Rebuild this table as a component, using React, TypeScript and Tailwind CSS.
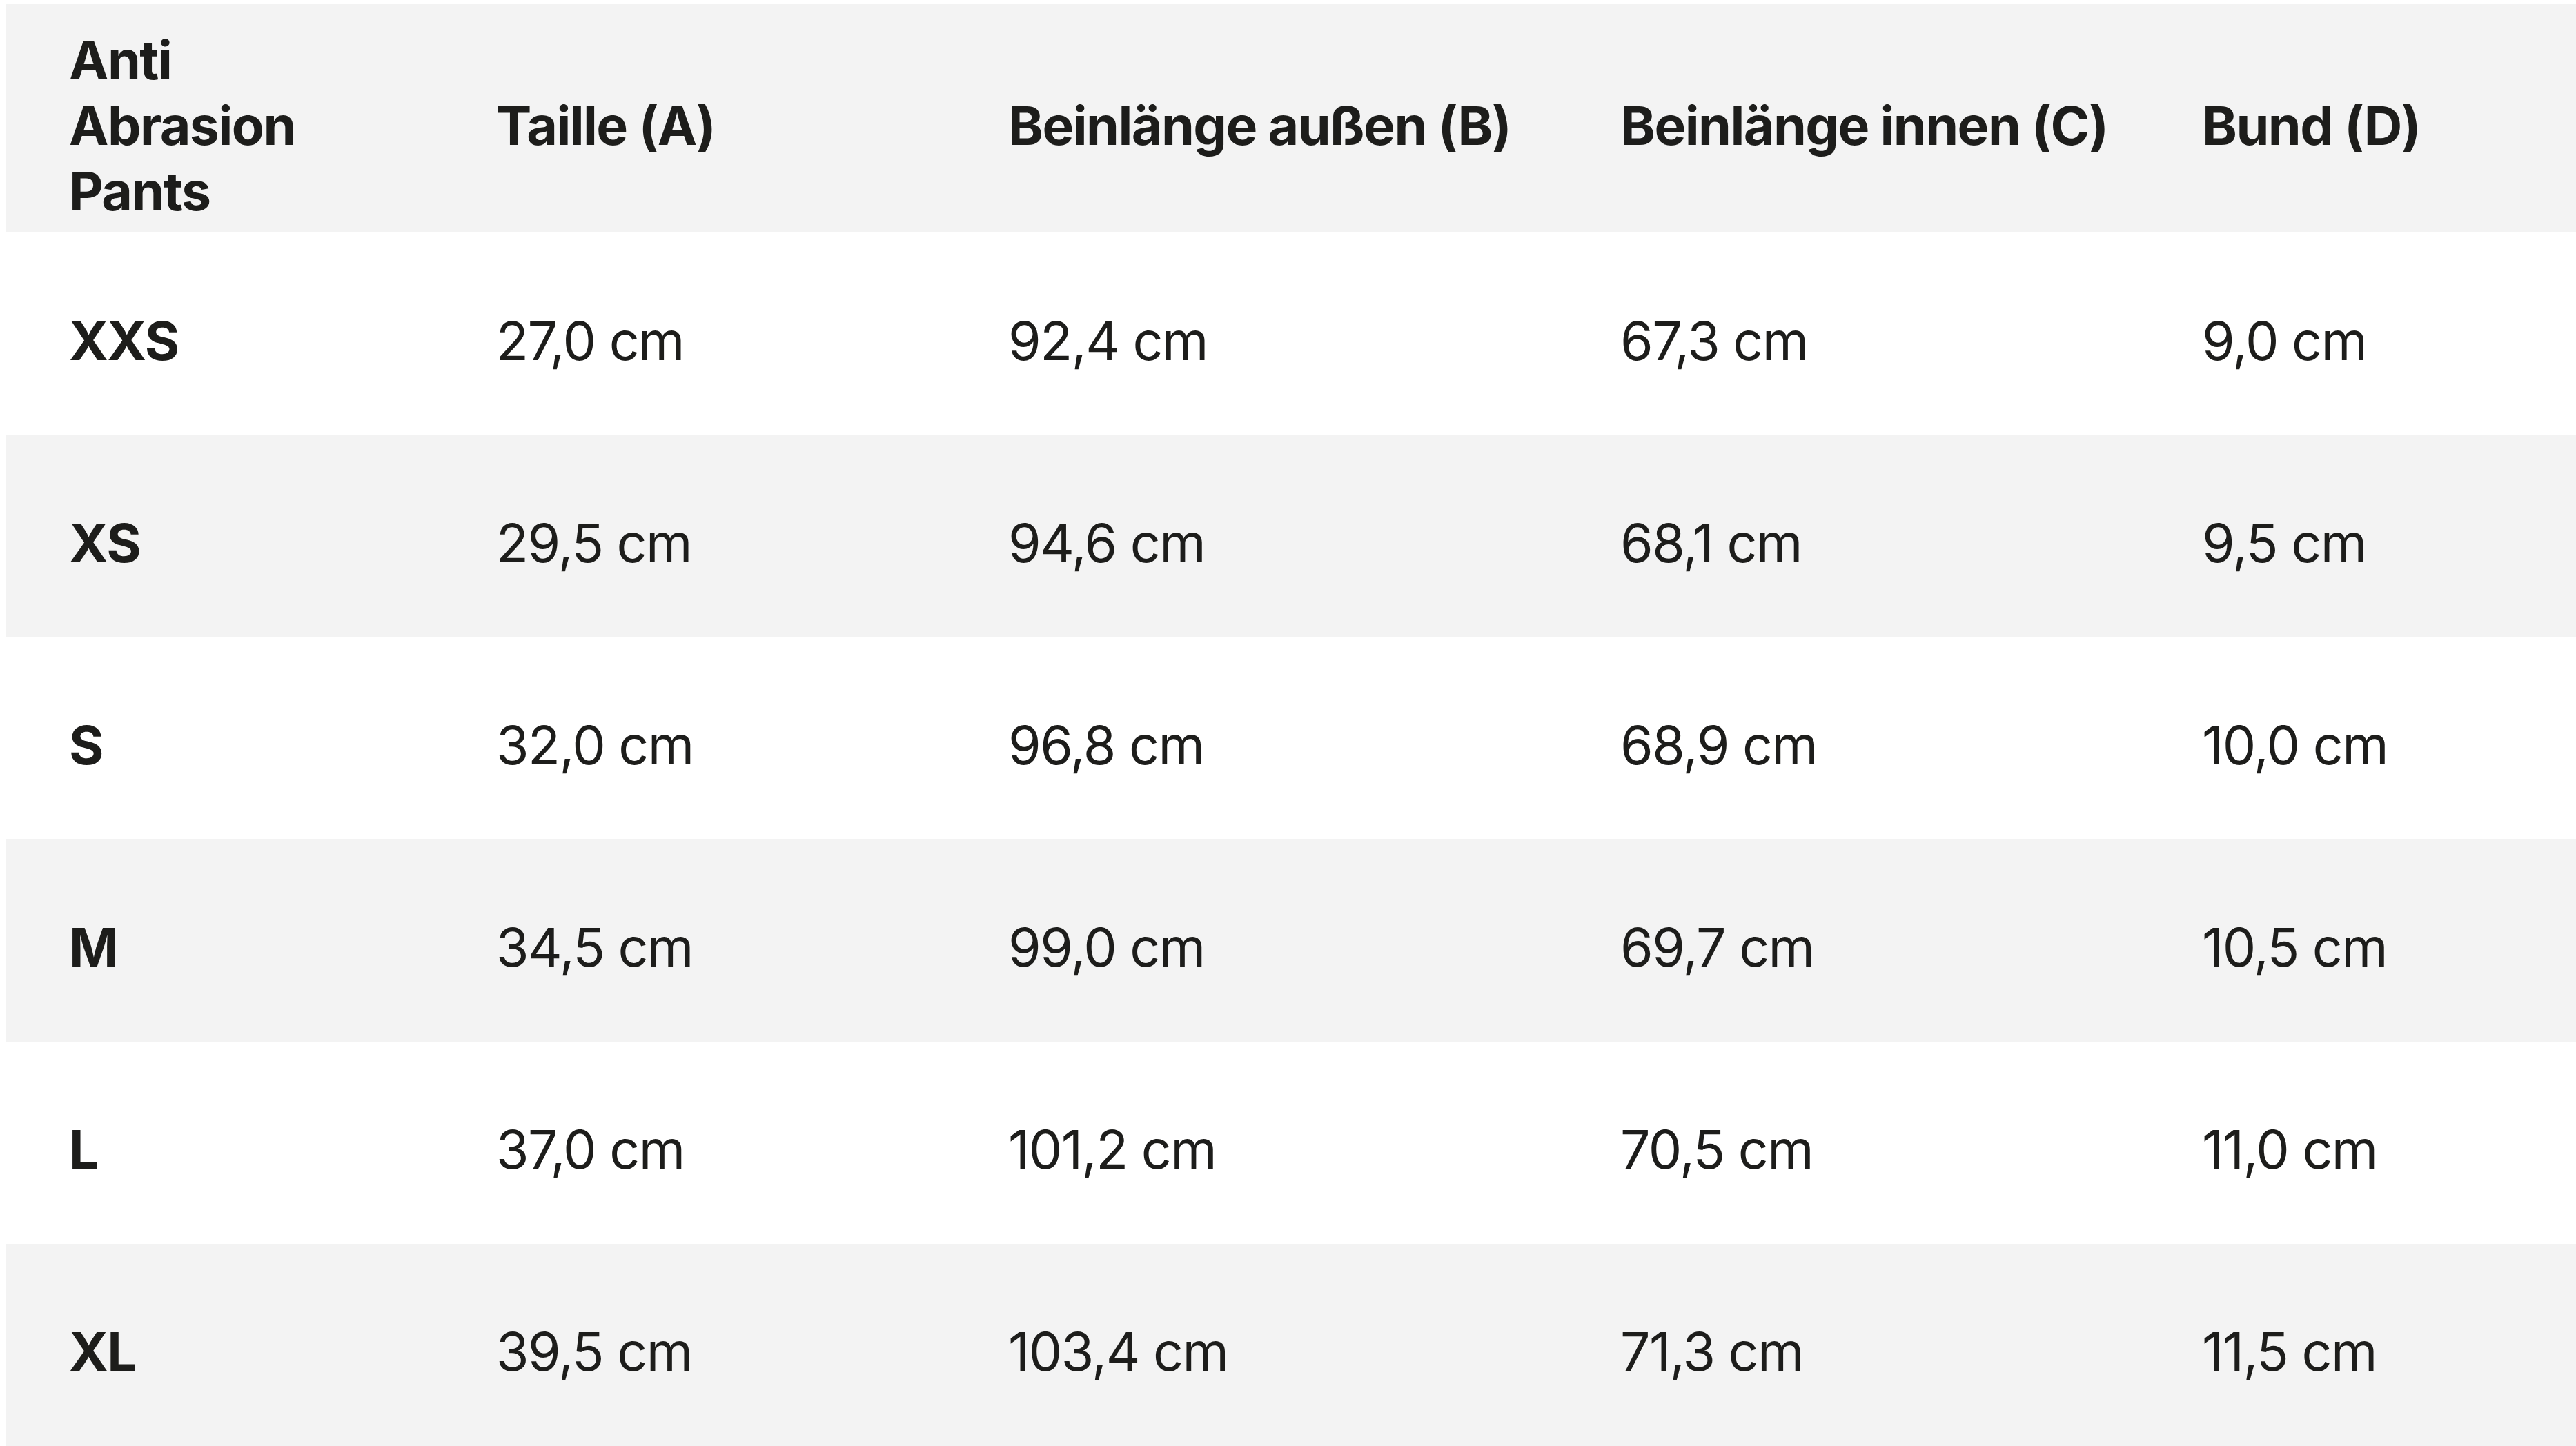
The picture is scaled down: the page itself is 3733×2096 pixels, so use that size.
import React from "react";

const headers = ["Taille (A)", "Beinlänge außen (B)", "Beinlänge innen (C)", "Bund (D)"];

const rows: [string, string, string, string, string][] = [
  ["XXS", "27,0 cm", "92,4 cm", "67,3 cm", "9,0 cm"],
  ["XS", "29,5 cm", "94,6 cm", "68,1 cm", "9,5 cm"],
  ["S", "32,0 cm", "96,8 cm", "68,9 cm", "10,0 cm"],
  ["M", "34,5 cm", "99,0 cm", "69,7 cm", "10,5 cm"],
  ["L", "37,0 cm", "101,2 cm", "70,5 cm", "11,0 cm"],
  ["XL", "39,5 cm", "103,4 cm", "71,3 cm", "11,5 cm"],
];

export default function App() {
  return (
    <div
      className="w-[3733px] h-[2096px] bg-white pt-[6px] pl-[9px] text-[#1d1d1b] text-[77px] leading-[95px]"
      style={{ fontFamily: "Inter, 'Noto Sans', sans-serif" }}
    >
      <div className="grid h-full grid-cols-[619px_742px_887px_843px_1fr] grid-rows-[331px_repeat(6,1fr)]">
        <div className="flex items-center bg-[#f3f3f3] pl-[91px] pt-[21px] font-bold tracking-[-0.02em]">
          <span>
            Anti
            <br />
            Abrasion
            <br />
            Pants
          </span>
        </div>
        {headers.map((h) => (
          <div
            key={h}
            className="flex items-center bg-[#f3f3f3] pl-[91px] pt-[21px] font-bold tracking-[-0.02em] whitespace-nowrap"
          >
            {h}
          </div>
        ))}
        {rows.map((r, i) => (
          <React.Fragment key={r[0]}>
            {r.map((c, j) => (
              <div
                key={j}
                className={
                  (i % 2 === 1 ? "bg-[#f3f3f3] " : "bg-white ") +
                  (j === 0 ? "font-bold " : "font-normal ") +
                  "flex items-center pl-[91px] pt-[21px] tracking-[-0.02em] whitespace-nowrap"
                }
              >
                {c}
              </div>
            ))}
          </React.Fragment>
        ))}
      </div>
    </div>
  );
}
